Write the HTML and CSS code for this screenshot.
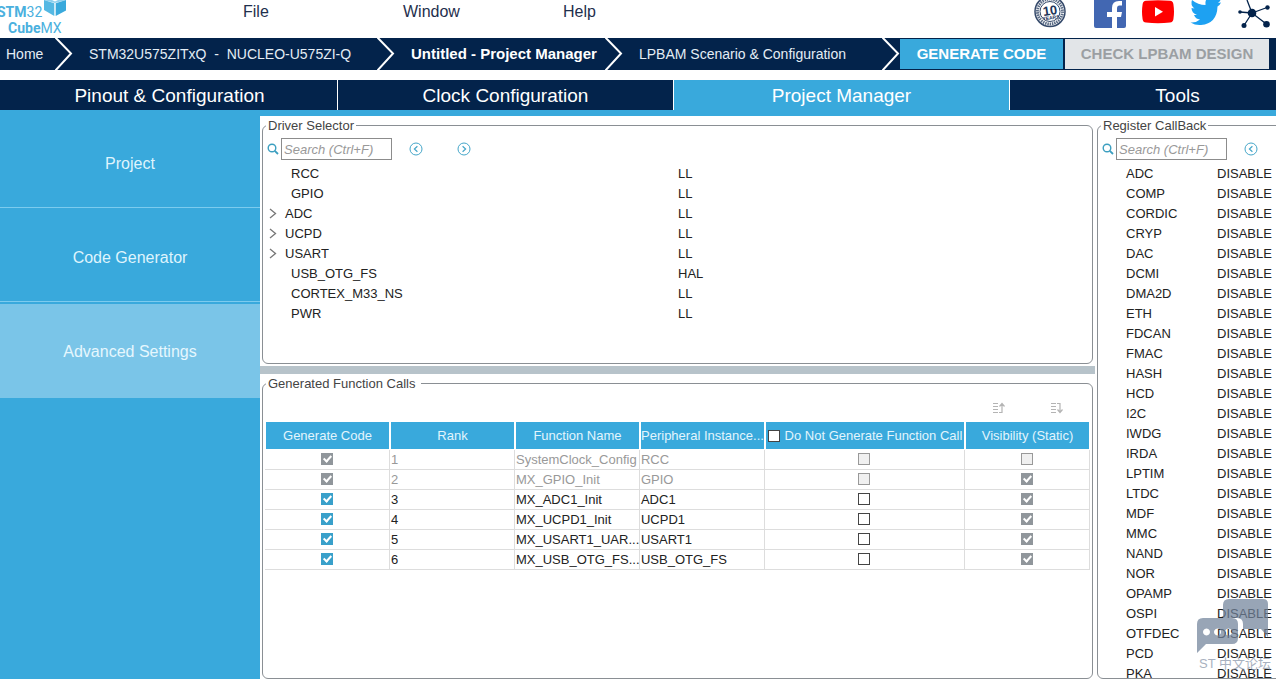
FILE: index.html
```
<!DOCTYPE html>
<html lang="en">
<head>
<meta charset="utf-8">
<title>STM32CubeMX - Project Manager</title>
<link rel="stylesheet" href="styles.css">
</head>
<body>
<svg class="defs" aria-hidden="true">
  <symbol id="search" viewBox="0 0 12 12"><circle cx="5" cy="5" r="3.8" fill="none" stroke="currentColor" stroke-width="1.4"/><path d="M7.8 7.8 11 11" stroke="currentColor" stroke-width="1.8"/></symbol>
  <symbol id="prev" viewBox="0 0 14 14"><circle cx="7" cy="7" r="6" fill="none" stroke="currentColor"/><path d="M8.4 4.2 5.4 7l3 2.8" fill="none" stroke="currentColor" stroke-width="1.2"/></symbol>
  <symbol id="next" viewBox="0 0 14 14"><circle cx="7" cy="7" r="6" fill="none" stroke="currentColor"/><path d="M5.6 4.2 8.6 7l-3 2.8" fill="none" stroke="currentColor" stroke-width="1.2"/></symbol>
  <symbol id="crumb" viewBox="0 0 18 32"><path d="M0 -1 16 15.500 0 33" fill="none" stroke="#fff" stroke-width="2"/></symbol>
  <symbol id="expand" viewBox="0 0 8 12"><path d="M1 1 6.500 5.500 1 10" fill="none" stroke="#777" stroke-width="1.300"/></symbol>
</svg>

<header class="header">
  <div class="logo" aria-label="STM32 CubeMX">
    <div class="logo-top"><b>STM</b>32</div>
    <div class="logo-bottom"><b>Cube</b>MX</div>
    <svg class="logo-cube" viewBox="0 0 22 16"><path d="M0 0h8l3 1.500L14 0h8l-11 3z" fill="#8fd0ee"/><path d="M0 0 10.300 3.200V16L0 10z" fill="#54b8e3"/><path d="M22 0 11.700 3.200V16L22 10.500z" fill="#39a9dc"/></svg>
  </div>
  <nav class="menu">
    <button>File</button><button>Window</button><button>Help</button>
  </nav>
  <div class="social">
    <a class="badge" href="#" aria-label="10 years"><svg viewBox="0 0 32 32"><circle cx="16" cy="11.500" r="15" fill="#fff" stroke="#34496a" stroke-width="1.500"/><circle cx="16" cy="11.500" r="12.500" fill="none" stroke="#5b6c86" stroke-width="3" stroke-dasharray="1.500 .8"/><circle cx="16" cy="11.500" r="10" fill="#fff" stroke="#34496a"/><g transform="rotate(-8 16 11)" fill="#1d355a" font-family="Liberation Sans" font-weight="bold" text-anchor="middle"><text x="16" y="15" font-size="13">10</text><text x="16" y="19.500" font-size="5">YEARS</text></g></svg></a>
    <a href="#" aria-label="Facebook"><svg viewBox="0 0 32 32"><path d="M0 0h32v26q0 2-2 2H2q-2 0-2-2z" fill="#4267b2"/><path d="M18 28V17h-5v-5h5V8q0-7 7-7h3v4.500h-2.500Q23 5.500 23 8.500V12h5l-1 5h-4v11z" fill="#fff"/></svg></a>
    <a href="#" aria-label="YouTube"><svg viewBox="0 0 32 32"><path d="M4 .8Q16-.4 28 .8q3 .3 3.400 3.400 1.200 7.800 0 15-.4 3-3.400 3.400-12 1.200-24 0-3-.3-3.400-3.400-1.200-7.200 0-15Q1 1.100 4 .8z" fill="#f00"/><path d="M13 7v9.500l8-4.700z" fill="#fff"/></svg></a>
    <a href="#" aria-label="Twitter"><svg viewBox="0 0 32 32"><path d="M16 0q-1 2-.5 5Q8 5 2 0q-2 5 2.500 8.500L1.500 8q0 5 5.500 7H4q1.500 4 6 4.500Q6 23 .5 22.500q5 3 10.500 2.500 16-1.500 16.500-18.500Q30 5 31 2.500L28 3q2-1.500 2.500-3z" fill="#1da1f2"/></svg></a>
    <a href="#" aria-label="Community"><svg viewBox="0 0 32 32"><path d="M9 0 14 13 29 7.500M14 13 2 12M14 13 6 25.500M14 13 29 24.500" fill="none" stroke="#03234b" stroke-width="1.300"/><g fill="#03234b"><circle cx="14" cy="13" r="4.300"/><circle cx="29.500" cy="7.500" r="2.200"/><circle cx="2" cy="12" r="1.800"/><circle cx="6" cy="25.500" r="2.500"/><circle cx="28.500" cy="24.300" r="3.300"/></g></svg></a>
  </div>
</header>

<nav class="crumbs">
  <a class="crumb home" href="#"><span>Home</span><svg><use href="#crumb"/></svg></a>
  <a class="crumb board" href="#"><span>STM32U575ZITxQ&nbsp; -&nbsp; NUCLEO-U575ZI-Q</span><svg><use href="#crumb"/></svg></a>
  <a class="crumb file" href="#"><span>Untitled - Project Manager</span><svg><use href="#crumb"/></svg></a>
  <a class="crumb lpbam" href="#"><span>LPBAM Scenario &amp; Configuration</span><svg><use href="#crumb"/></svg></a>
  <div class="actions">
    <button class="generate">GENERATE CODE</button>
    <button class="check" disabled>CHECK LPBAM DESIGN</button>
  </div>
</nav>

<div class="tabs">
  <button>Pinout &amp; Configuration</button>
  <button>Clock Configuration</button>
  <button class="active">Project Manager</button>
  <button>Tools</button>
</div>

<div class="workspace">
  <aside class="sidebar">
    <button>Project</button>
    <button>Code Generator</button>
    <button class="active">Advanced Settings</button>
  </aside>

  <main class="center">
    <fieldset class="panel drivers">
      <legend>Driver Selector</legend>
      <div class="search">
        <svg class="glass"><use href="#search"/></svg>
        <input type="text" placeholder="Search (Ctrl+F)" aria-label="Search drivers">
        <button aria-label="Previous"><svg><use href="#prev"/></svg></button>
        <button aria-label="Next"><svg><use href="#next"/></svg></button>
      </div>
      <ul class="tree">
        <li><span>RCC</span><span>LL</span></li>
        <li><span>GPIO</span><span>LL</span></li>
        <li class="group"><span><svg><use href="#expand"/></svg>ADC</span><span>LL</span></li>
        <li class="group"><span><svg><use href="#expand"/></svg>UCPD</span><span>LL</span></li>
        <li class="group"><span><svg><use href="#expand"/></svg>USART</span><span>LL</span></li>
        <li><span>USB_OTG_FS</span><span>HAL</span></li>
        <li><span>CORTEX_M33_NS</span><span>LL</span></li>
        <li><span>PWR</span><span>LL</span></li>
      </ul>
    </fieldset>
    <div class="splitter"></div>
    <fieldset class="panel calls">
      <legend>Generated Function Calls</legend>
      <div class="sort">
        <button aria-label="Move up" disabled><svg viewBox="0 0 12 12"><path d="M0 1.500h5M0 4.500h5M0 7.500h5M0 10.500h5M6 10.500h3V2M6.500 4.500 9 1.500l2.500 3" fill="none" stroke="#b4b4b4" stroke-width="1.200"/></svg></button>
        <button aria-label="Move down" disabled><svg viewBox="0 0 12 12"><path d="M0 1.500h5M0 4.500h5M0 7.500h5M0 10.500h5M6 1.500h3V10M6.500 7.500 9 10.500l2.500-3" fill="none" stroke="#b4b4b4" stroke-width="1.200"/></svg></button>
      </div>
      <table>
        <colgroup><col><col><col><col><col class="wide"><col></colgroup>
        <thead><tr><th>Generate Code</th><th>Rank</th><th>Function Name</th><th>Peripheral Instance...</th><th><label><input type="checkbox">Do Not Generate Function Call</label></th><th>Visibility (Static)</th></tr></thead>
        <tbody>
          <tr class="off"><td><input type="checkbox" aria-label="Generate" checked disabled></td><td>1</td><td>SystemClock_Config</td><td>RCC</td><td><input type="checkbox" aria-label="Do not call" disabled></td><td><input type="checkbox" aria-label="Static" disabled></td></tr>
          <tr class="off"><td><input type="checkbox" aria-label="Generate" checked disabled></td><td>2</td><td>MX_GPIO_Init</td><td>GPIO</td><td><input type="checkbox" aria-label="Do not call" disabled></td><td><input type="checkbox" aria-label="Static" checked disabled></td></tr>
          <tr><td><input type="checkbox" aria-label="Generate" checked></td><td>3</td><td>MX_ADC1_Init</td><td>ADC1</td><td><input type="checkbox" aria-label="Do not call"></td><td><input type="checkbox" aria-label="Static" checked disabled></td></tr>
          <tr><td><input type="checkbox" aria-label="Generate" checked></td><td>4</td><td>MX_UCPD1_Init</td><td>UCPD1</td><td><input type="checkbox" aria-label="Do not call"></td><td><input type="checkbox" aria-label="Static" checked disabled></td></tr>
          <tr><td><input type="checkbox" aria-label="Generate" checked></td><td>5</td><td>MX_USART1_UAR...</td><td>USART1</td><td><input type="checkbox" aria-label="Do not call"></td><td><input type="checkbox" aria-label="Static" checked disabled></td></tr>
          <tr><td><input type="checkbox" aria-label="Generate" checked></td><td>6</td><td>MX_USB_OTG_FS...</td><td>USB_OTG_FS</td><td><input type="checkbox" aria-label="Do not call"></td><td><input type="checkbox" aria-label="Static" checked disabled></td></tr>
        </tbody>
      </table>
    </fieldset>
  </main>

  <fieldset class="panel callbacks">
    <legend>Register CallBack</legend>
    <div class="search">
      <svg class="glass"><use href="#search"/></svg>
      <input type="text" placeholder="Search (Ctrl+F)" aria-label="Search callbacks">
      <button aria-label="Previous"><svg><use href="#prev"/></svg></button>
    </div>
    <ul class="tree">
      <li><span>ADC</span><span>DISABLE</span></li>
      <li><span>COMP</span><span>DISABLE</span></li>
      <li><span>CORDIC</span><span>DISABLE</span></li>
      <li><span>CRYP</span><span>DISABLE</span></li>
      <li><span>DAC</span><span>DISABLE</span></li>
      <li><span>DCMI</span><span>DISABLE</span></li>
      <li><span>DMA2D</span><span>DISABLE</span></li>
      <li><span>ETH</span><span>DISABLE</span></li>
      <li><span>FDCAN</span><span>DISABLE</span></li>
      <li><span>FMAC</span><span>DISABLE</span></li>
      <li><span>HASH</span><span>DISABLE</span></li>
      <li><span>HCD</span><span>DISABLE</span></li>
      <li><span>I2C</span><span>DISABLE</span></li>
      <li><span>IWDG</span><span>DISABLE</span></li>
      <li><span>IRDA</span><span>DISABLE</span></li>
      <li><span>LPTIM</span><span>DISABLE</span></li>
      <li><span>LTDC</span><span>DISABLE</span></li>
      <li><span>MDF</span><span>DISABLE</span></li>
      <li><span>MMC</span><span>DISABLE</span></li>
      <li><span>NAND</span><span>DISABLE</span></li>
      <li><span>NOR</span><span>DISABLE</span></li>
      <li><span>OPAMP</span><span>DISABLE</span></li>
      <li><span>OSPI</span><span>DISABLE</span></li>
      <li><span>OTFDEC</span><span>DISABLE</span></li>
      <li><span>PCD</span><span>DISABLE</span></li>
      <li><span>PKA</span><span>DISABLE</span></li>
    </ul>
  </fieldset>
</div>

<div class="watermark">
  <svg viewBox="0 0 72 56"><path d="M32 0h34q5 0 5 5v33l-7-8H46V25q0-6-6-6H26V6q0-6 6-6z"/><path fill-rule="evenodd" d="M6 19h29q6 0 6 6v14q0 6-6 6H9l-9 9V25q0-6 6-6zM9.500 29.500a3.500 3.500 0 1 0 .01 0zM20.500 29.500a3.500 3.500 0 1 0 .01 0zM31.500 29.500a3.500 3.500 0 1 0 .01 0z"/></svg>
  <span>ST 中文论坛</span>
</div>
</body>
</html>
```

FILE: styles.css
```
* { box-sizing: border-box; }
body {
  margin: 0;
  height: 100vh;
  display: flex;
  flex-direction: column;
  overflow: hidden;
  position: relative;
  background: #fff;
  color: #222;
  font: 13px/20px "Liberation Sans", Arial, sans-serif;
}
button { border: 0; padding: 0; margin: 0; background: none; font: inherit; color: inherit; }
a { color: inherit; text-decoration: none; }
svg { display: block; flex: none; }
ul { list-style: none; margin: 0; padding: 0; }
.defs { position: absolute; width: 0; height: 0; }

/* header */
.header { display: flex; height: 38px; flex: none; padding-right: 6px; align-items: flex-start; }
.logo {
  position: relative;
  width: 243px;
  height: 36px;
  padding-top: 4px;
  color: #4ab0de;
  font: 14px/16px Roboto, "Liberation Sans", sans-serif;
}
.logo-top { margin-left: -3px; }
.logo-bottom { margin-left: 8px; }
.logo-cube { position: absolute; left: 44px; top: 0; width: 22px; height: 16px; }
.menu { display: flex; flex: 1; font-size: 16px; line-height: 24px; color: #1f2f4d; }
.menu button { width: 160px; text-align: left; }
.social { display: flex; gap: 16px; }
.social svg { width: 32px; height: 32px; }
.badge { margin-right: 12px; }

/* breadcrumb */
.crumbs { display: flex; flex: none; height: 32px; background: #03234b; color: #fff; font-size: 15px; line-height: 32px; }
.crumb { display: flex; justify-content: space-between; padding-left: 16px; white-space: nowrap; color: #e4edf5; font-size: 14px; }
.crumb svg { width: 18px; height: 32px; }
.home { width: 73px; padding-left: 6px; }
.board { width: 322px; }
.file { width: 228px; color: #fff; font-weight: bold; font-size: 15px; }
.lpbam { width: 277px; }
.actions { display: flex; flex: 1; gap: 2px; padding: 1px 7px 1px 0; font-weight: bold; }
.actions button { line-height: 30px; }
.generate { flex: 163; background: #39a9dc; color: #fff; }
.check { flex: 204; background: #e2e5e8; color: #9b9fa3; }

/* main tabs */
.tabs {
  display: grid;
  grid-template-columns: repeat(4, 1fr);
  flex: none;
  height: 36px;
  margin: 10px -70px 0 0;
  padding-left: 2px;
  background: linear-gradient(#03234b 30px, #39a9dc 30px);
  color: #fff;
  font-size: 19px;
  line-height: 28px;
}
.tabs button { height: 30px; padding-top: 2px; border-right: 1px solid #fff; }
.tabs .active { background: #39a9dc; }

.workspace {
  display: grid;
  grid-template-columns: 260px minmax(0, 1fr) 239px;
  grid-template-rows: minmax(0, 1fr);
  flex: 1;
  min-height: 0;
  margin-right: -60px;
}

/* sidebar */
.sidebar { display: flex; flex-direction: column; gap: 2px; background: #39a9dc; color: #dff4fd; font-size: 16px; }
.sidebar button { height: 92px; padding-top: 5px; border-bottom: 1px solid #7ccbee; }
.sidebar .active { height: 94px; padding-top: 2px; border: 0; background: #7ac5e8; color: #e6f7fe; }

/* panels */
.center { display: flex; flex-direction: column; min-height: 0; }
.panel { min-width: 0; min-height: 0; margin: 0; padding: 0; border: 1px solid #8a8f94; border-radius: 6px; }
.panel legend { margin-left: 3px; padding: 0 2px; line-height: 19px; color: #444; }
.drivers { height: 248px; margin: 0 4px 2px 2px; }
.splitter { height: 8px; margin-right: 2px; background: #b7c3ca; }
.calls { flex: 1; margin: 0 4px 0 2px; }
.calls legend { padding-right: 6px; }

.search { display: flex; align-items: center; height: 28px; padding-left: 4px; }
.search .glass { width: 12px; height: 12px; margin-right: 2px; color: #3c9fc0; }
.search input {
  width: 111px;
  height: 22px;
  padding: 0 2px;
  border: 1px solid #8c8c8c;
  font: italic 13px "Liberation Sans", sans-serif;
}
.search input::placeholder { color: #999; opacity: 1; }
.search button { margin-left: 17px; color: #45a6c9; }
.search button + button { margin-left: 34px; }
.search button svg { width: 14px; height: 14px; }
.tree { padding-top: 1px; }
.tree li { display: grid; grid-template-columns: 1fr 1fr; padding-left: 1px; }
.tree span { display: flex; align-items: center; }
.tree span:first-child { padding-left: 27px; }
.tree .group span:first-child { padding-left: 5px; }
.tree li svg { width: 8px; height: 12px; margin-right: 8px; }

/* function call table */
.sort { display: flex; justify-content: flex-end; gap: 46px; height: 29px; padding: 5px 29px 0 0; }
.sort button { height: 20px; }
.sort svg { width: 12px; height: 12px; }
.calls table { width: calc(100% - 4px); margin-left: 2px; table-layout: fixed; border-collapse: separate; border-spacing: 0; }
.calls col { width: 15.15%; }
.calls .wide { width: 24.25%; }
th, td { padding: 0; white-space: nowrap; overflow: hidden; }
th { height: 28px; background: #39a9dc; color: #e2f5fd; font-weight: normal; border: 1px solid #fff; border-top: 0; }
td { height: 20px; line-height: 19px; border-right: 1px solid #ddd; border-bottom: 1px solid #ddd; padding-left: 1px; }
td:first-child, td:nth-child(n+5) { text-align: center; padding: 0 0 1px; }
.off { color: #999; }
th label { display: flex; justify-content: center; align-items: center; gap: 5px; }
input[type="checkbox"] {
  appearance: none;
  display: block;
  flex: none;
  width: 12px;
  height: 12px;
  margin: 0 auto;
  border: 1px solid #444;
  background: #fff;
}
th input[type="checkbox"] { margin: 0; }
input[type="checkbox"]:disabled { border-color: #999; background: #f0f0f0; }
input[type="checkbox"]:checked { border-color: #39a0ca; background: #39a0ca; }
input[type="checkbox"]:checked:disabled { border-color: #90969b; background: #90969b; }
input[type="checkbox"]:checked::after {
  content: "";
  display: block;
  box-sizing: border-box;
  width: 5px;
  height: 8px;
  margin-left: 3px;
  border: solid #fff;
  border-width: 0 2px 2px 0;
  transform: rotate(42deg);
}

.watermark {
  position: absolute;
  right: 7px;
  bottom: 6px;
  width: 72px;
  color: #8794a8;
  font: 13px/18px "Liberation Sans", "Noto Sans CJK SC", sans-serif;
  white-space: nowrap;
  opacity: .72;
  pointer-events: none;
}
.watermark svg { width: 72px; height: 56px; fill: #71839b; }
.watermark span { display: block; padding-left: 2px; }
```
